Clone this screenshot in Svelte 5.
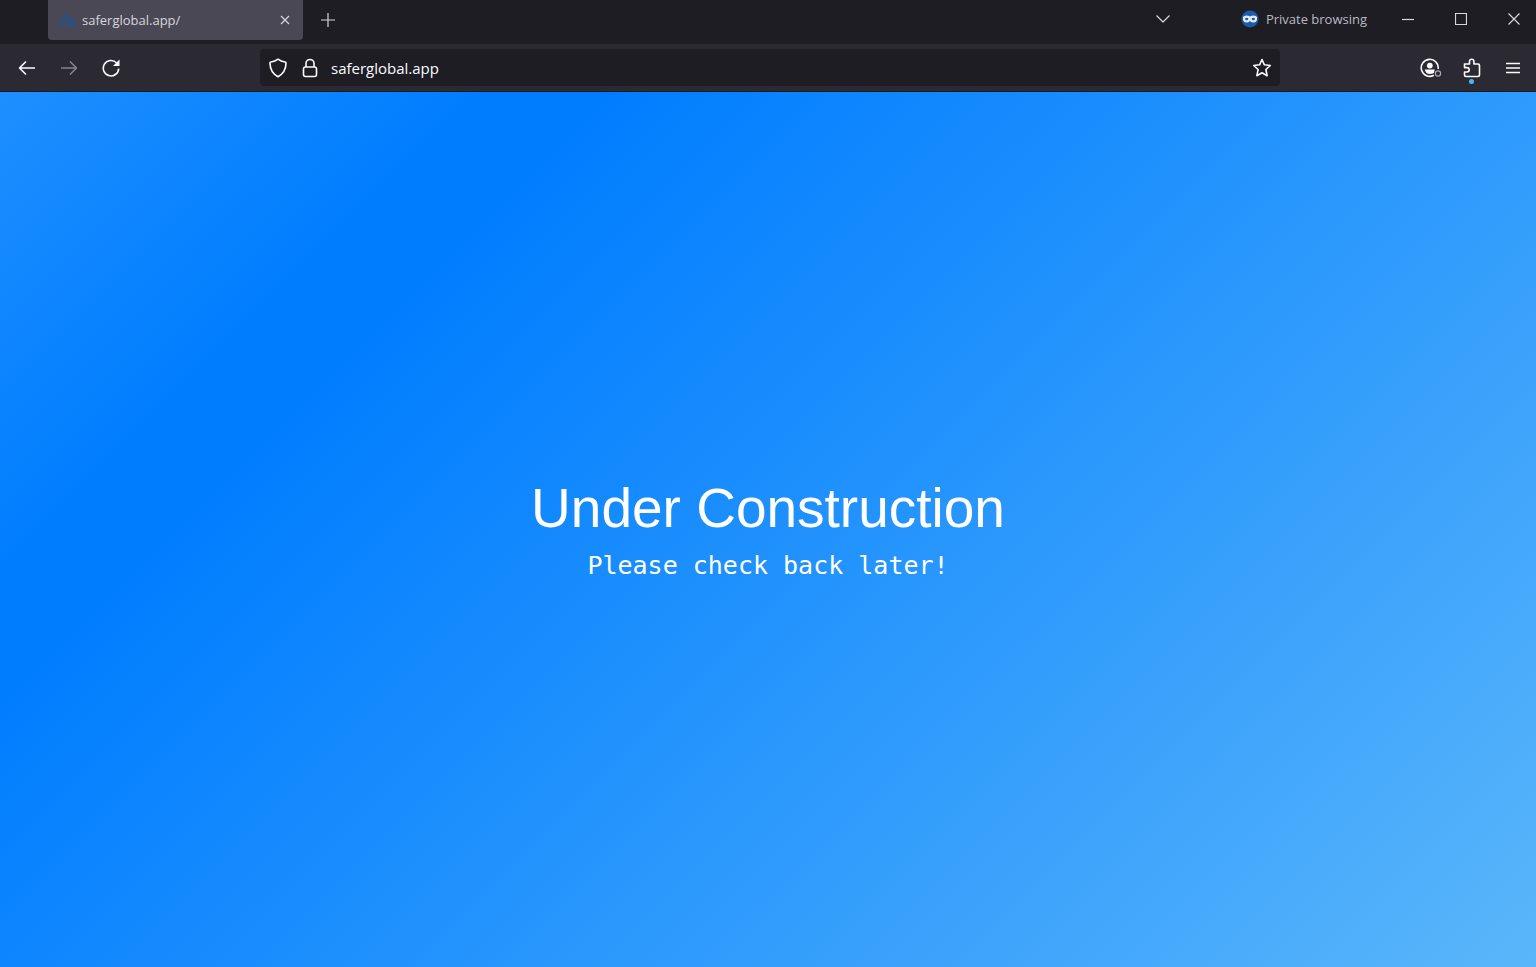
<script>
  let address = $state('saferglobal.app');
</script>

<svelte:head>
  <title>saferglobal.app/</title>
</svelte:head>

<div class="window">
  <header>
    <div class="titlebar">
      <div class="tab">
        <svg class="favicon" width="18" height="14" viewBox="0 0 18 14">
          <path d="M5 12.500H1.200L6.500 2L9.500 7.500M8 12.500L12.500 4.500L17 12.500H8z" />
        </svg>
        <span class="tab-title">saferglobal.app/</span>
        <button class="tab-close" aria-label="Close tab">
          <svg width="10" height="10" viewBox="0 0 10 10"><path d="M1 1l8 8M9 1l-8 8" /></svg>
        </button>
      </div>
      <button class="new-tab" aria-label="New tab">
        <svg width="14" height="14" viewBox="0 0 14 14"><path d="M7 0v14M0 7h14" /></svg>
      </button>

      <div class="titlebar-right">
        <button class="tab-list" aria-label="List all tabs">
          <svg width="16" height="16" viewBox="0 0 16 16"><path d="M1.500 4.500L8 11l6.500-6.500" /></svg>
        </button>
        <div class="private">
          <svg width="18" height="18" viewBox="0 0 18 18">
            <circle cx="9" cy="9" r="8.500" fill="#1b5da8" />
            <path d="M2 7Q3 5.500 5.500 5.500Q7.500 5.500 9 6.500Q10.500 5.500 12.500 5.500Q15 5.500 16 7V9.500Q15.500 12.500 12.500 12.500Q10.500 12.500 9 11Q7.500 12.500 5.500 12.500Q2.500 12.500 2 9.500z" fill="#e3ebf8" />
            <ellipse cx="5.700" cy="9" rx="1.600" ry="1.200" fill="#1b5da8" />
            <ellipse cx="12.300" cy="9" rx="1.600" ry="1.200" fill="#1b5da8" />
          </svg>
          <span>Private browsing</span>
        </div>
        <div class="window-controls">
          <button aria-label="Minimize">
            <svg width="12" height="12" viewBox="0 0 12 12"><path d="M0 6.500h12" /></svg>
          </button>
          <button aria-label="Maximize">
            <svg width="12" height="12" viewBox="0 0 12 12"><path d="M.5.5h11v11H.5z" /></svg>
          </button>
          <button aria-label="Close">
            <svg width="12" height="12" viewBox="0 0 12 12"><path d="M.5.5l11 11M11.500.5l-11 11" /></svg>
          </button>
        </div>
      </div>
    </div>

    <div class="toolbar">
      <nav>
        <button aria-label="Back">
          <svg width="18" height="16" viewBox="0 0 18 16"><path d="M17 8H1.500M8 1.500L1.500 8L8 14.500" /></svg>
        </button>
        <button class="forward" aria-label="Forward" disabled>
          <svg width="18" height="16" viewBox="0 0 18 16"><path d="M1 8h15.500M10 1.500L16.500 8L10 14.500" /></svg>
        </button>
        <button aria-label="Reload">
          <svg width="18" height="18" viewBox="0 0 18 18">
            <path d="M14.500 3.800A7.700 7.700 0 1 0 16.700 9.600" />
            <path d="M17.500.5v6.500h-6.500z" fill="#fbfbfe" stroke="none" />
          </svg>
        </button>
      </nav>

      <div class="urlbar">
        <button aria-label="Tracking protection">
          <svg width="18" height="20" viewBox="0 0 18 20">
            <path d="M9 1.200Q12 3.500 16 4Q17.200 4.200 17 5.500Q16.800 14.500 9 18.700Q1.200 14.500 1 5.500Q.8 4.200 2 4Q6 3.500 9 1.200z" />
          </svg>
        </button>
        <button aria-label="Site information">
          <svg width="16" height="20" viewBox="0 0 16 20">
            <rect x="1.500" y="9" width="13" height="9.500" rx="2" />
            <path d="M4 9V5.500a4 4 0 0 1 8 0V9" />
          </svg>
        </button>
        <input type="text" aria-label="Address" spellcheck="false" bind:value={address} />
        <button aria-label="Bookmark this page">
          <svg width="20" height="20" viewBox="0 0 20 20">
            <path d="M10 1.500L12.400 6.800L18.300 7.500L13.900 11.500L15.100 17.700L10 14.800L4.900 17.700L6.100 11.500L1.700 7.500L7.600 6.800z" />
          </svg>
        </button>
      </div>

      <div class="actions">
        <button aria-label="Account">
          <svg width="22" height="20" viewBox="0 0 22 20">
            <path d="M13.800 17.300A8.500 8.500 0 1 1 18.200 10.800" />
            <circle cx="9.800" cy="7.600" r="2.900" fill="#fbfbfe" stroke="none" />
            <path d="M4.800 11.500h10q-.8 2-.8 3.500q-2 1-4.200 1q-4 0-5-4.500z" fill="#fbfbfe" stroke="none" />
            <circle class="status" cx="18" cy="15.500" r="2.600" />
          </svg>
        </button>
        <button class="extensions" aria-label="Extensions">
          <svg width="18" height="20" viewBox="0 0 18 20">
            <path d="M1.500 6H6.500V3.500a2.200 2.200 0 0 1 4.400 0V6H15Q16.500 6 16.500 7.500V17Q16.500 18.500 15 18.500H3Q1.500 18.500 1.500 17V14H4a2.200 2.200 0 0 0 0-4.400H1.500z" />
          </svg>
          <span class="dot"></span>
        </button>
        <button aria-label="Open application menu">
          <svg width="14" height="12" viewBox="0 0 14 12"><path d="M0 1.500h14M0 6h14M0 10.500h14" /></svg>
        </button>
      </div>
    </div>
  </header>

  <main>
    <h1>Under Construction</h1>
    <p>Please check back later!</p>
  </main>
</div>

<style>
  :global(body) {
    margin: 0;
    background: #1c1b22;
  }

  .window {
    display: flex;
    flex-direction: column;
    min-height: 100vh;
    font-family: "Open Sans", "Noto Sans", sans-serif;
    color: #fbfbfe;
  }

  button {
    display: flex;
    align-items: center;
    justify-content: center;
    padding: 0;
    border: 0;
    background: none;
    color: inherit;
  }

  svg {
    display: block;
    fill: none;
    stroke: currentColor;
    stroke-width: 1.6;
    stroke-linejoin: round;
  }

  .titlebar {
    display: flex;
    align-items: flex-start;
    height: 44px;
    padding-left: 48px;
    background: #1e1d24;
    color: #d6d6de;
  }

  .titlebar svg {
    stroke-width: 1.2;
  }

  .tab {
    display: flex;
    align-items: center;
    box-sizing: border-box;
    width: 255px;
    height: 40px;
    padding: 0 8px 0 10px;
    border-radius: 0 0 4px 4px;
    background: #4a4854;
  }

  .tab .favicon {
    stroke: #1159a6;
    stroke-width: 1.5;
  }

  .tab-title {
    flex: 1;
    margin-left: 6px;
    font-size: 13px;
  }

  .tab-close {
    width: 20px;
    height: 20px;
  }

  .new-tab {
    width: 50px;
    height: 40px;
  }

  .titlebar-right {
    display: flex;
    align-items: center;
    height: 38px;
    margin-left: auto;
  }

  .tab-list {
    width: 32px;
    height: 32px;
    margin-right: 62px;
  }

  .private {
    display: flex;
    align-items: center;
    gap: 7px;
    margin-right: 14px;
    font-size: 13px;
    color: #b9b9c2;
  }

  .private svg {
    stroke: none;
  }

  .window-controls {
    display: flex;
    margin-right: -4px;
  }

  .window-controls button {
    width: 53px;
    height: 38px;
  }

  .window {
    overflow-x: hidden;
  }

  .toolbar {
    display: flex;
    align-items: center;
    box-sizing: border-box;
    height: 48px;
    border-bottom: 1px solid #1c1b22;
    background: #2b2a33;
  }

  nav {
    display: flex;
    flex: 0 0 254px;
    padding-left: 6px;
  }

  nav button {
    width: 42px;
    height: 36px;
  }

  .forward {
    color: #85848e;
  }

  .urlbar {
    display: flex;
    flex: 1;
    align-items: center;
    box-sizing: border-box;
    height: 37px;
    padding: 0 2px;
    border-radius: 4px;
    background: #1e1d24;
  }

  .urlbar button {
    width: 32px;
    height: 32px;
  }

  .urlbar input {
    flex: 1;
    min-width: 0;
    height: 32px;
    padding: 0 0 0 5px;
    border: 0;
    outline: 0;
    background: none;
    color: #fbfbfe;
    font-family: inherit;
    font-size: 15px;
  }

  .actions {
    display: flex;
    flex: 0 0 253px;
    justify-content: flex-end;
    padding-right: 3px;
  }

  .actions button {
    width: 41px;
    height: 36px;
  }

  .status {
    stroke: #a9a8b2;
    stroke-width: 1.2;
  }

  .extensions {
    position: relative;
  }

  .dot {
    position: absolute;
    bottom: 2px;
    left: 18px;
    width: 5px;
    height: 5px;
    border-radius: 50%;
    background: #4db3f8;
  }

  main {
    display: flex;
    flex: 1;
    flex-direction: column;
    align-items: center;
    justify-content: center;
    gap: 12px;
    background: linear-gradient(135deg, #1e8fff 0%, #007dff 20%, #007dff 25%, #5ab6fa 100%);
    color: #fff;
  }

  h1 {
    margin: 0;
    font-family: "Liberation Sans", Arial, sans-serif;
    font-size: 55px;
    font-weight: 400;
    line-height: 60px;
  }

  p {
    margin: 0;
    font-family: Consolas, "DejaVu Sans Mono", monospace;
    font-size: 25px;
    line-height: 32px;
  }
</style>
